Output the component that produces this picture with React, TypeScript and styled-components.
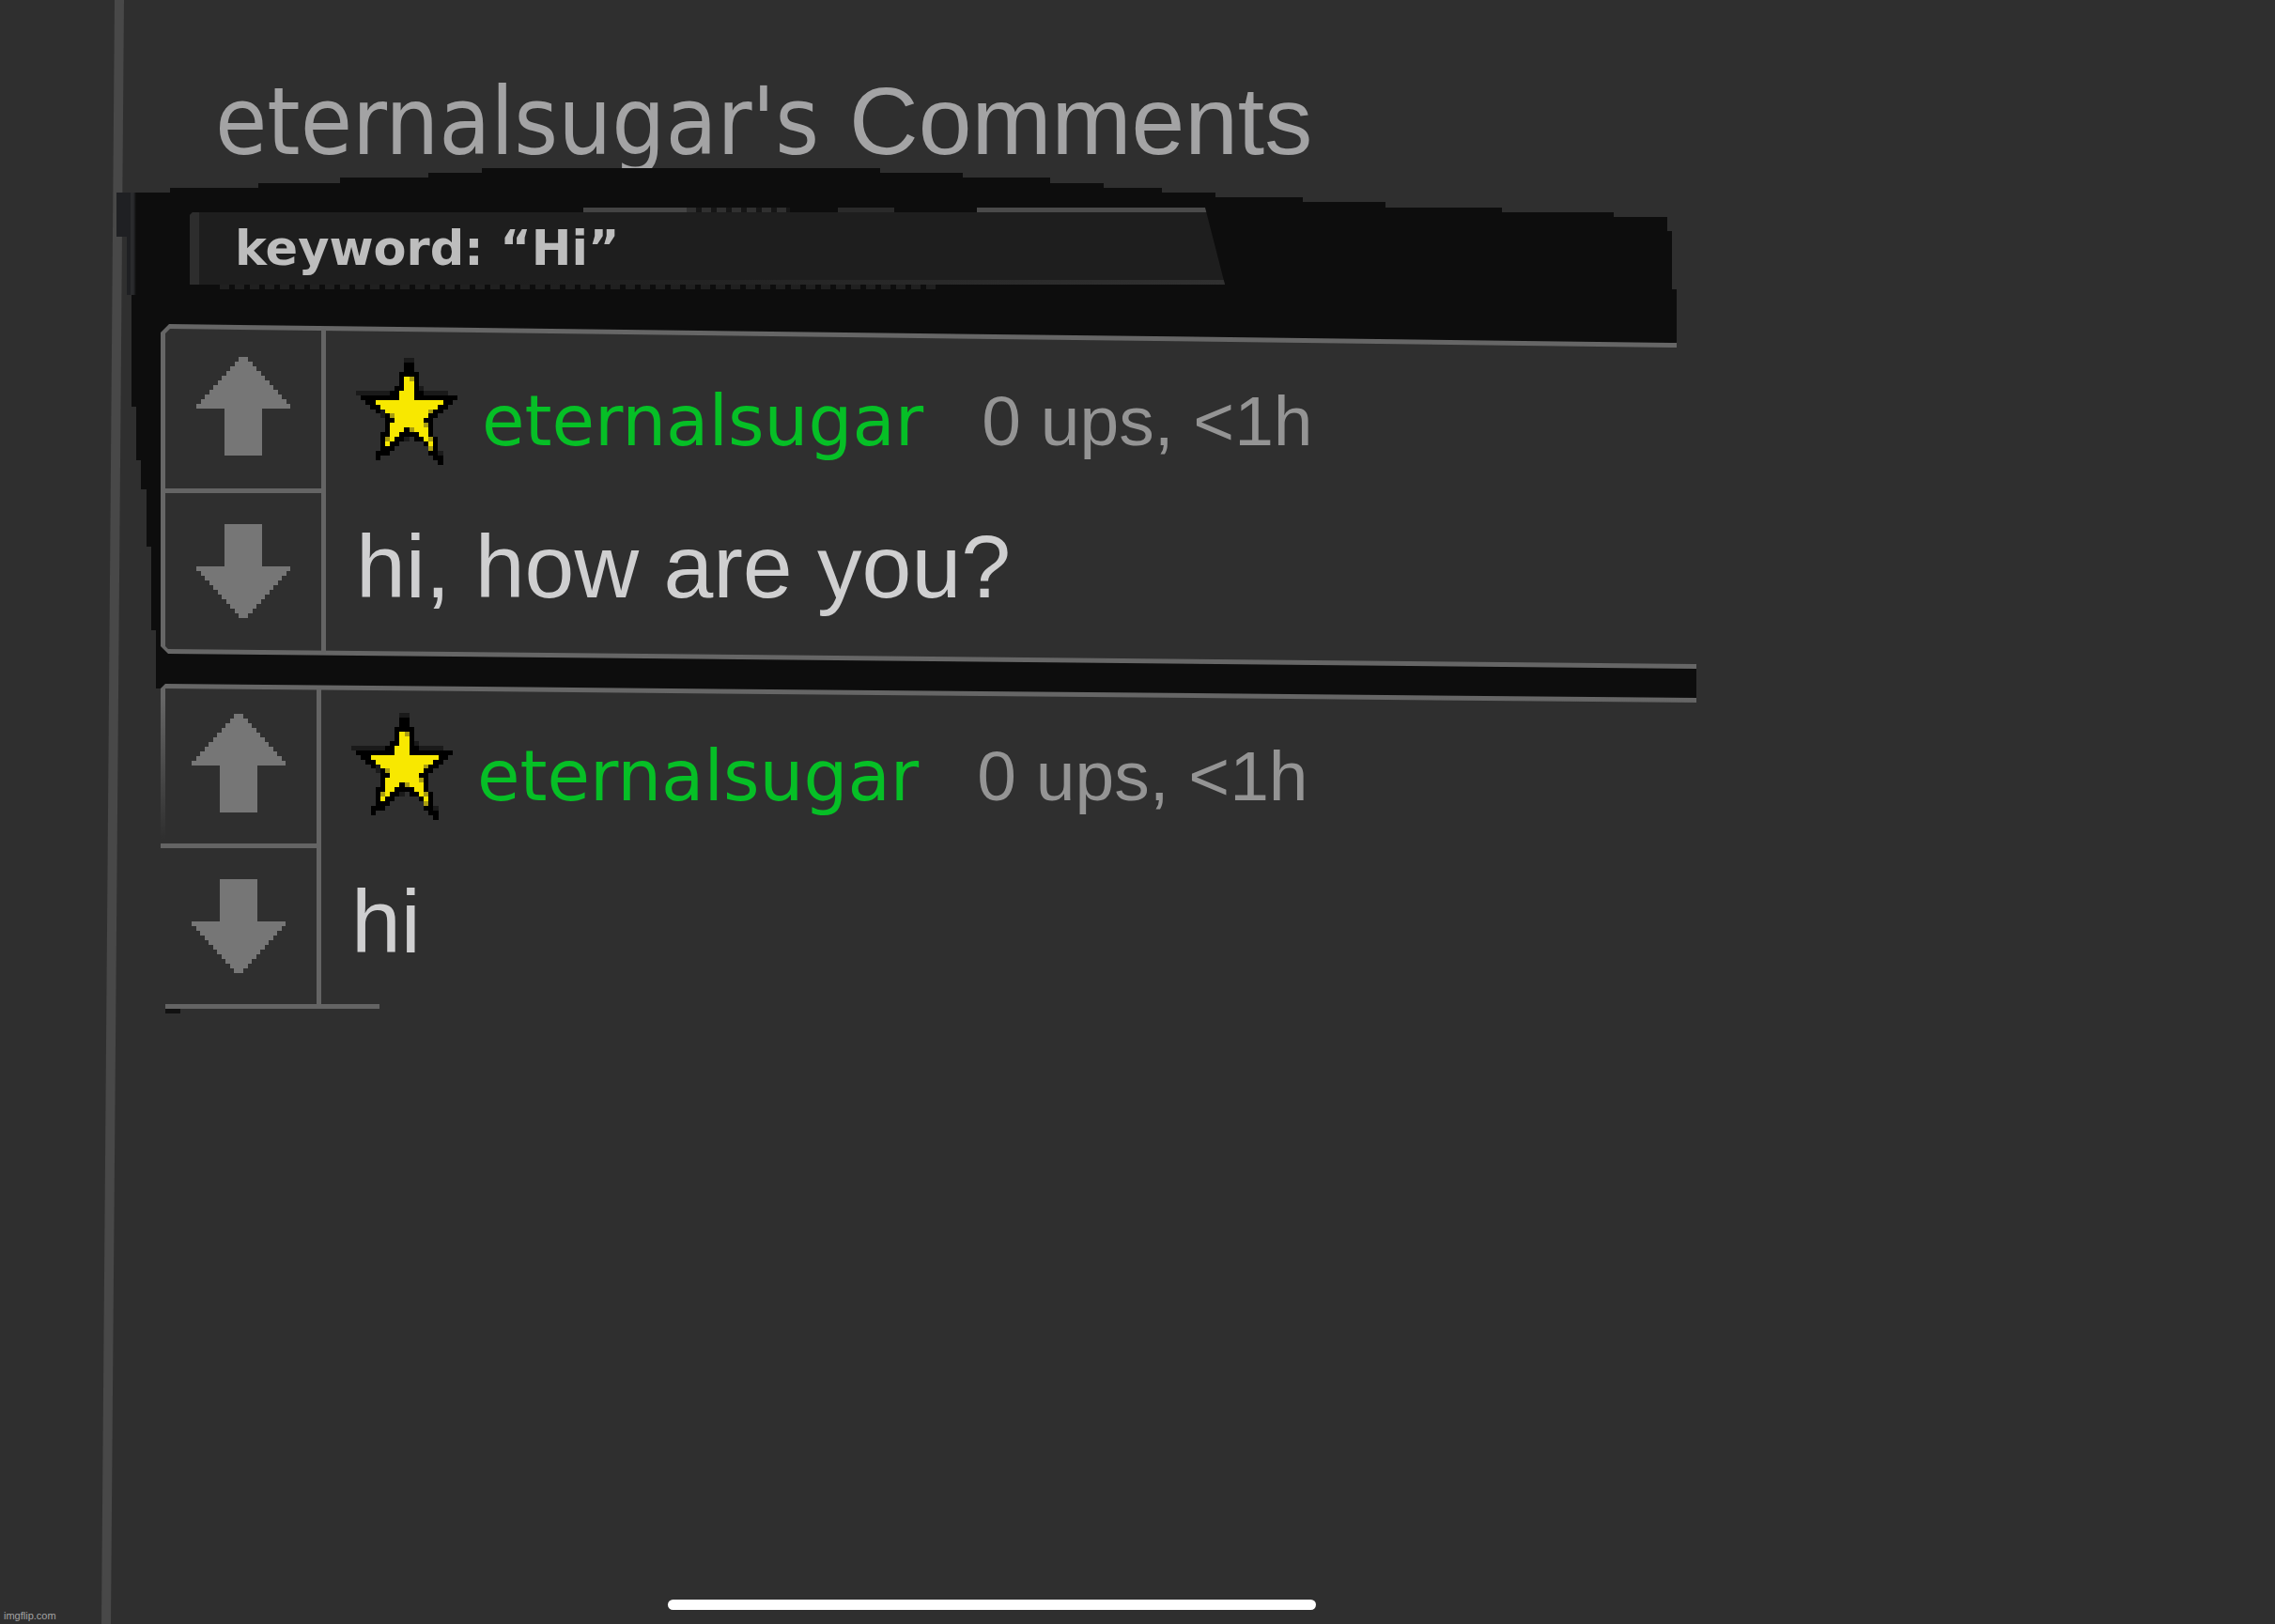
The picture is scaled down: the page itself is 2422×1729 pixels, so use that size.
import React from "react";
import styled, { createGlobalStyle } from "styled-components";

const verdana = `"DejaVu Sans", sans-serif`;
const arial = `"Liberation Sans", Arial, sans-serif`;

const GlobalStyle = createGlobalStyle`
  body {
    margin: 0;
    background: #2f2f2f;
    color: #cfcfd0;
    font-family: ${arial};
  }
`;

const Page = styled.div`
  position: relative;
  display: flex;
  flex-direction: column;
  min-height: 100vh;
  overflow: hidden;
`;

/* Thin slanted rule that runs down the whole page behind the content. */
const Rail = styled.div`
  position: absolute;
  top: 0;
  bottom: 0;
  left: 107px;
  width: 26px;
  background: #484848;
  clip-path: polygon(15px 0, 25px 0, 11px 100%, 1px 100%);
`;

const Main = styled.main`
  position: relative;
  padding: 0 616px 0 124px;
`;

const Title = styled.h1`
  display: flex;
  align-items: baseline;
  gap: 32px;
  height: 179px;
  margin: 0;
  padding-left: 105px;
  box-sizing: border-box;
  font-weight: 400;
  color: #a3a3a4;
  white-space: nowrap;
`;

const TitleName = styled.span`
  font: 400 100px/258px "DejaVu Sans Condensed", ${verdana};
`;

const TitleWord = styled.span`
  font: 400 102px/258px ${arial};
`;

const Board = styled.section`
  position: relative;

  &::before {
    content: "";
    position: absolute;
    inset: 0 0 auto 0;
    height: 568px;
    background: linear-gradient(to right, #1f2023 0 15px, #2a2b2d 15px 18px, #0d0d0d 21px) 0 0 / 21px
      135px no-repeat #0d0d0d;
    clip-path: polygon(
      0 26px, 57px 26px, 57px 21px, 151px 21px, 151px 16px, 238px 16px, 238px 10px, 332px 10px,
      332px 5px, 389px 5px, 389px 0, 813px 0, 813px 5px, 901px 5px, 901px 10px, 994px 10px,
      994px 16px, 1051px 16px, 1051px 21px, 1113px 21px, 1113px 26px, 1170px 26px, 1170px 31px,
      1263px 31px, 1263px 36px, 1351px 36px, 1351px 42px, 1475px 42px, 1475px 47px,
      calc(100% - 88px) 47px, calc(100% - 88px) 52px, calc(100% - 31px) 52px,
      calc(100% - 31px) 67px, calc(100% - 26px) 67px, calc(100% - 26px) 129px,
      calc(100% - 21px) 129px, calc(100% - 21px) 191px, calc(100% - 21px) 500px, 100% 520px,
      100% 568px, 60px 554px, 42px 554px, 42px 492px, 37px 492px, 37px 403px, 32px 403px,
      32px 342px, 26px 342px, 26px 311px, 21px 311px, 21px 254px, 16px 254px, 16px 135px,
      11px 135px, 11px 73px, 0 73px
    );
  }
`;

const SearchForm = styled.form`
  position: relative;
  display: flex;
  height: 166px;
  padding: 42px 502px 0 78px;
  box-sizing: border-box;
`;

const Keyword = styled.input`
  flex: 1;
  min-width: 0;
  height: 87px;
  box-sizing: border-box;
  padding: 0 48px;
  border: 0;
  outline: 0;
  border-radius: 0;
  color: #bdbdbd;
  font: 700 51px/77px ${verdana};
  background:
    linear-gradient(#444 0 0) 419px 0 / 110px 5px no-repeat,
    repeating-linear-gradient(to right, #303030 0 10px, #161616 10px 16px) 529px 0 / 110px 5px
      no-repeat,
    linear-gradient(#2a2a2a 0 0) 690px 0 / 60px 5px no-repeat,
    linear-gradient(#4a4a4a 0 0) 838px 0 / 300px 5px no-repeat,
    linear-gradient(#2d2d2d 0 0) 0 5px / 10px 77px no-repeat,
    linear-gradient(to right, #1e1e1e 30%, #303030) 0 77px / 100% 5px no-repeat,
    repeating-linear-gradient(to right, #202020 0 10px, #0d0d0d 10px 16px) 32px 82px / 800px 5px
      no-repeat,
    linear-gradient(#1e1e1e 0 0) 0 5px / 100% 77px no-repeat;
  clip-path: polygon(0 8px, 8px 0, calc(100% - 21px) 0, 100% 82px, 800px 82px, 800px 100%, 0 100%, 0 8px);
`;

const CommentList = styled.div`
  position: relative;
  display: flex;
  flex-direction: column;
  gap: 11px;
  padding-left: 47px;
`;

const Card = styled.article<{ $open?: boolean }>`
  position: relative;
  display: grid;
  grid-template-columns: 171px 1fr;
  height: ${(p) => (p.$open ? "351px" : "367px")};
  padding: ${(p) => (p.$open ? "5px 0 0" : "5px 0 16px 5px")};
  box-sizing: border-box;
  background: ${(p) => (p.$open ? "linear-gradient(#666 0 20px, #2f2f2f 170px)" : "#666")};
  clip-path: ${(p) =>
    p.$open
      ? "polygon(0 10px, 5px 5px, 100% 20px, 100% 100%, 0 100%)"
      : `polygon(0 9px, 9px 0, calc(100% - 21px) 20px, calc(100% - 21px) 25px, 100% 25px,
          100% 100%, 8px calc(100% - 16px), 0 calc(100% - 24px))`};

  &::before {
    content: "";
    position: absolute;
    inset: 0;
    background: #2f2f2f;
    clip-path: ${(p) =>
      p.$open
        ? "polygon(5px 10px, 100% 25px, 100% 100%, 5px 100%)"
        : `polygon(5px 10px, 10px 5px, calc(100% - 21px) 25px, 100% 25px,
            100% calc(100% - 5px), 8px calc(100% - 21px), 5px calc(100% - 24px))`};
  }
`;

const Votes = styled.div<{ $open?: boolean }>`
  position: relative;
  display: grid;
  grid-template-rows: 170px 1fr;
  border-right: 5px solid #646464;
  ${(p) => p.$open && "margin-top: 5px; grid-template-rows: 165px 1fr;"}
`;

const VoteButton = styled.button`
  display: flex;
  align-items: center;
  justify-content: center;
  padding: 0 0 6px;
  border: 0;
  background: none;
  color: #767676;

  & + & {
    border-top: 5px solid #646464;
  }
`;

const Body = styled.div`
  position: relative;
  min-width: 0;
  padding: 31px 0 0 32px;
`;

const Meta = styled.header`
  display: flex;
  align-items: flex-end;
  gap: 26px;
`;

const MetaText = styled.div`
  display: flex;
  align-items: baseline;
  gap: 62px;
  line-height: 94px;
  white-space: nowrap;
`;

const Author = styled.a`
  color: #06bf26;
  font-family: ${verdana};
  font-size: 74px;
  text-decoration: none;
`;

const Stats = styled.span`
  color: #949494;
  font-size: 75px;
`;

const Message = styled.p`
  margin: 51px 0 0;
  font-size: 95px;
  line-height: 114px;
  white-space: nowrap;
`;

/* Short closing rule under the last comment. */
const EndRule = styled.div`
  width: 228px;
  height: 5px;
  margin: -16px 0 0 5px;
  position: relative;
  background: #646464;

  &::after {
    content: "";
    position: absolute;
    top: 5px;
    left: 0;
    width: 16px;
    height: 5px;
    background: #111;
  }
`;

const Footer = styled.footer`
  position: relative;
  display: flex;
  align-items: flex-end;
  height: 26px;
  margin-top: auto;
`;

const SiteLink = styled.a`
  width: 707px;
  flex: none;
  padding: 0 0 2px 4px;
  box-sizing: border-box;
  color: #a4a4a4;
  font-size: 11px;
  line-height: 13px;
  text-decoration: none;
`;

const HomeBar = styled.div`
  width: 690px;
  height: 11px;
  margin: 0 0 15px 4px;
  border-radius: 6px;
  background: #fff;
`;

function Arrow({ down }: { down?: boolean }) {
  const rows = down
    ? [...Array(9).fill([6, 8]), ...Array.from({ length: 11 }, (_, i) => [i * 0.9, 20 - i * 1.8])]
    : [...Array.from({ length: 11 }, (_, i) => [9 - i * 0.9, 2 + i * 1.8]), ...Array(10).fill([6, 8])];
  return (
    <svg width="100" height={rows.length * 5} viewBox={`0 0 20 ${rows.length}`} shapeRendering="crispEdges" aria-hidden>
      {rows.map(([x, w], i) => (
        <rect key={i} x={x} y={i} width={w} height="1" fill="currentColor" />
      ))}
    </svg>
  );
}

/* k black, y yellow, o olive shade, d soft edge */
const starCells = [
  "..........dd.........",
  "..........kk.........",
  "..........kk.........",
  ".........kkkk........",
  ".........kyok........",
  ".........kyyk........",
  "........kkyykd.......",
  "dddddddkkyyykkddddd..",
  ".kkkkkkkkyyykkkkkkkkk",
  "..kkyyyyyyyyyyyyyykk.",
  "...kkyyyyyyyyyyyykk..",
  "....kdyyyyyyyyyokk...",
  ".....dkoyyyyyyykk....",
  "......kkyyyyyykk.....",
  "......kyyyyyyyok.....",
  "......kyyykoyyyk.....",
  ".....kkyykkkkyyk.....",
  ".....koykkd.kkyok....",
  ".....kykk.....kyk....",
  ".....kkk.......ok....",
  "....kkk........kkd...",
  "....k...........kk...",
  ".................k...",
];
const starFill: Record<string, string> = { k: "#000", y: "#f8e800", o: "#a89c10", d: "#1a1a1a" };

function Star() {
  return (
    <svg width="108" height="114" viewBox="0 0 21 23" preserveAspectRatio="none" shapeRendering="crispEdges" aria-hidden>
      {starCells.flatMap((row, y) =>
        [...row].map((c, x) =>
          c === "." ? null : <rect key={`${x}-${y}`} x={x} y={y} width="1" height="1" fill={starFill[c]} />
        )
      )}
    </svg>
  );
}

function Comment({ text, open }: { text: string; open?: boolean }) {
  return (
    <Card $open={open}>
      <Votes $open={open}>
        <VoteButton type="button" aria-label="Upvote">
          <Arrow />
        </VoteButton>
        <VoteButton type="button" aria-label="Downvote">
          <Arrow down />
        </VoteButton>
      </Votes>
      <Body>
        <Meta>
          <Star />
          <MetaText>
            <Author href="#">eternalsugar</Author>
            <Stats>0 ups, &lt;1h</Stats>
          </MetaText>
        </Meta>
        <Message>{text}</Message>
      </Body>
    </Card>
  );
}

export default function App() {
  return (
    <Page>
      <GlobalStyle />
      <Rail />
      <Main>
        <Title>
          <TitleName>eternalsugar's</TitleName>
          <TitleWord>Comments</TitleWord>
        </Title>
        <Board>
          <SearchForm>
            <Keyword aria-label="Keyword" defaultValue="keyword: “Hi”" />
          </SearchForm>
          <CommentList>
            <Comment text="hi, how are you?" />
            <Comment text="hi" open />
            <EndRule />
          </CommentList>
        </Board>
      </Main>
      <Footer>
        <SiteLink href="#">imgflip.com</SiteLink>
        <HomeBar />
      </Footer>
    </Page>
  );
}
